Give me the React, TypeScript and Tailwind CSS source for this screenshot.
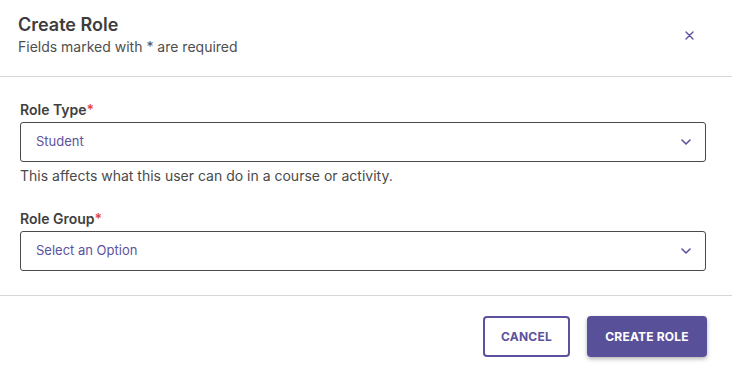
import React from "react";

const ChevronDown = () => (
  <svg width="10" height="6" viewBox="0 0 10 6" fill="none">
    <path d="M1 1l4 4 4-4" stroke="#5b529e" strokeWidth="1.6" strokeLinecap="round" strokeLinejoin="round" />
  </svg>
);

const CloseIcon = () => (
  <svg width="9" height="9" viewBox="0 0 9 9" fill="none">
    <path d="M1 1l7 7M8 1L1 8" stroke="#5b529e" strokeWidth="1.4" strokeLinecap="round" />
  </svg>
);

const SelectField = ({ label, value, helper }: { label: string; value: string; helper?: string }) => (
  <div className="flex flex-col">
    <label className="text-[14px] leading-5 font-semibold text-[#3f3f3f]">
      {label}
      <span className="text-[#e0463c]">*</span>
    </label>
    <button
      type="button"
      className="mt-[2px] h-[40px] w-full flex items-center justify-between rounded-[3px] border border-[#4a4a4a] pl-[15px] pr-[14px] text-left"
    >
      <span className="text-[13px] text-[#5b529e]">{value}</span>
      <ChevronDown />
    </button>
    {helper && <p className="mt-[4px] text-[14px] leading-5 text-[#4a4a4a]">{helper}</p>}
  </div>
);

export default function App() {
  return (
    <div className="w-[732px] h-[378px] bg-white" style={{ fontFamily: "Inter, 'Noto Sans', sans-serif" }}>
      <div className="flex items-start justify-between pl-[18px] pr-[38px] pt-[13px] pb-[19px] border-b border-[#d6d6d6]">
        <div>
          <h2 className="text-[18px] leading-6 font-semibold text-[#3d3d3d]">Create Role</h2>
          <p className="text-[14px] leading-5 text-[#4f4f4f]">Fields marked with * are required</p>
        </div>
        <button type="button" className="mt-[18px] flex items-center justify-center">
          <CloseIcon />
        </button>
      </div>

      <div className="flex flex-col gap-[23px] pl-[20px] pr-[26px] pt-[23px] pb-[24px] border-b border-[#d6d6d6]">
        <SelectField label="Role Type" value="Student" helper="This affects what this user can do in a course or activity." />
        <SelectField label="Role Group" value="Select an Option" />
      </div>

      <div className="flex justify-end gap-[17px] pr-[25px] pt-[20px]">
        <button
          type="button"
          className="h-[41px] w-[87px] rounded-[4px] border-2 border-[#5b529e] text-[12px] font-bold tracking-[0.2px] text-[#5b529e]"
        >
          CANCEL
        </button>
        <button
          type="button"
          className="h-[41px] w-[120px] rounded-[4px] bg-[#58519a] text-[12px] font-bold tracking-[0.2px] text-white shadow-[0_2px_4px_rgba(0,0,0,0.3)]"
        >
          CREATE ROLE
        </button>
      </div>
    </div>
  );
}
